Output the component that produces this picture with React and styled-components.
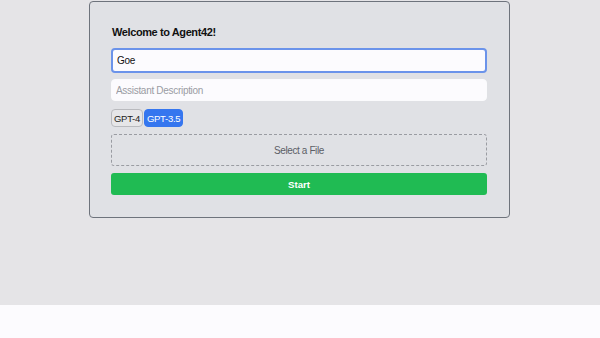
import React from "react";
import styled, { createGlobalStyle } from "styled-components";

const Global = createGlobalStyle`
  html, body { margin: 0; padding: 0; background: #fcfbfe; }
  body { font-family: "Liberation Sans", Arial, sans-serif; }
  * { box-sizing: border-box; }
`;

const Page = styled.div`
  display: flex;
  flex-direction: column;
  width: 600px;
  height: 338px;
`;

const Stage = styled.main`
  height: 305px;
  background: #e5e4e7;
  display: flex;
  justify-content: center;
  align-items: flex-start;
  padding-top: 1px;
`;

const Footer = styled.footer`
  flex: 1;
  background: #fcfbfe;
`;

const Card = styled.section`
  width: 421px;
  margin-left: -1px;
  background: #e0e1e5;
  border: 1px solid #6e737c;
  border-radius: 4px;
  padding: 22px 22px 22px 21px;
  display: flex;
  flex-direction: column;
`;

const Title = styled.h1`
  margin: 0 0 7px 1px;
  font-size: 11px;
  letter-spacing: -0.4px;
  line-height: 17px;
  font-weight: 700;
  color: #111;
`;

const Field = styled.input`
  width: 100%;
  height: ${(p) => (p.$focused ? "25px" : "22px")};
  border: ${(p) => (p.$focused ? "2px solid #6b93ea" : "1px solid #fbfbfd")};
  border-radius: 4px;
  background: #fcfbfe;
  font-family: inherit;
  font-size: 10px;
  letter-spacing: -0.3px;
  color: #111;
  padding: 0 4px;
  margin-bottom: ${(p) => p.$mb || 0}px;
  outline: none;
  &::placeholder { color: #9a9ca3; }
`;

const ModelRow = styled.div`
  display: flex;
  gap: 1px;
  margin-bottom: 7px;
`;

const ModelButton = styled.button`
  height: 18px;
  padding: 0 2px;
  border-radius: 4px;
  font-family: inherit;
  font-size: 9.5px;
  letter-spacing: -0.3px;
  border: 1px solid ${(p) => (p.$active ? "#3576ef" : "#b9babe")};
  background: ${(p) => (p.$active ? "#3576ef" : "#e6e6e8")};
  color: ${(p) => (p.$active ? "#fff" : "#222")};
  cursor: pointer;
`;

const Drop = styled.div`
  height: 32px;
  border: 1.5px dashed #9a9ca2;
  border-radius: 3px;
  display: flex;
  align-items: center;
  justify-content: center;
  font-size: 10px;
  letter-spacing: -0.4px;
  color: #5c5e65;
  margin-bottom: 7px;
`;

const Start = styled.button`
  height: 22px;
  width: 100%;
  border: none;
  border-radius: 3px;
  background: #20bb53;
  color: #fff;
  font-family: inherit;
  font-size: 9.6px;
  font-weight: 700;
`;

export default function App() {
  return (
    <Page>
      <Global />
      <Stage>
        <Card>
          <Title>Welcome to Agent42!</Title>
          <Field $focused defaultValue="Goe" $mb={6} />
          <Field placeholder="Assistant Description" $mb={8} />
          <ModelRow>
            <ModelButton>GPT-4</ModelButton>
            <ModelButton $active>GPT-3.5</ModelButton>
          </ModelRow>
          <Drop>Select a File</Drop>
          <Start>Start</Start>
        </Card>
      </Stage>
      <Footer />
    </Page>
  );
}
